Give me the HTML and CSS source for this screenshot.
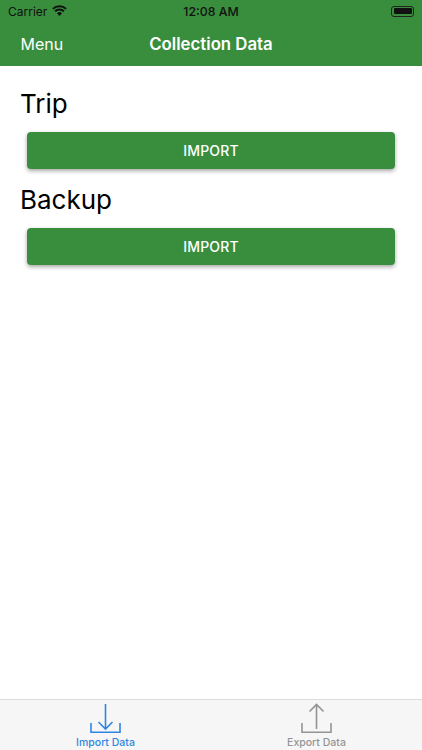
FILE: index.html
```html
<!DOCTYPE html>
<html lang="en">
<head>
  <meta charset="UTF-8">
  <meta name="viewport" content="width=device-width, initial-scale=1.0">
  <title>Collection Data</title>
  <link rel="stylesheet" href="styles.css">
</head>
<body>
  <div class="app">
    <header class="top">
      <div class="status-bar">
        <div class="status-left">
          <span class="carrier">Carrier</span>
          <svg class="wifi" width="15" height="11" viewBox="0 0 15 11">
            <path d="M7.500 11 5 8.300a3.600 3.600 0 0 1 5 0z" fill="#111"/>
            <path d="M.9 3.900a9.500 9.500 0 0 1 13.200 0M3.100 6.200a6.300 6.300 0 0 1 8.800 0" fill="none" stroke="#111" stroke-width="2"/>
          </svg>
        </div>
        <span class="clock">12:08 AM</span>
        <div class="battery"><span class="battery-fill"></span></div>
      </div>
      <div class="nav-bar">
        <span class="nav-menu">Menu</span>
        <span class="nav-title">Collection Data</span>
      </div>
    </header>

    <main class="content">
      <section class="group">
        <h2>Trip</h2>
        <button class="import-btn">IMPORT</button>
      </section>
      <section class="group">
        <h2>Backup</h2>
        <button class="import-btn">IMPORT</button>
      </section>
    </main>

    <nav class="tab-bar">
      <div class="tab-item active">
        <svg width="32" height="32" viewBox="0 0 32 32">
          <path d="M15.500 1v25M8.500 19l7 7 7-7M1 20v9.300h29V20" fill="none" stroke="currentColor" stroke-width="1.600"/>
        </svg>
        <span>Import Data</span>
      </div>
      <div class="tab-item">
        <svg width="32" height="32" viewBox="0 0 32 32">
          <path d="M15.500 26V1.500M8.500 8.500l7-7 7 7M1 20v9.300h29V20" fill="none" stroke="currentColor" stroke-width="1.600"/>
        </svg>
        <span>Export Data</span>
      </div>
    </nav>
  </div>
</body>
</html>
```

FILE: styles.css
```css
*{
  box-sizing: border-box;
}

html, body{
  margin: 0;
  height: 100%;
}

body{
  font-family: "Inter", "Liberation Sans", sans-serif;
  background: #fff;
}

.app{
  display: flex;
  flex-direction: column;
  height: 750px;
}

.top{
  background: #388e3c;
  height: 66px;
  flex-shrink: 0;
}

.status-bar{
  display: grid;
  grid-template-columns: 1fr auto 1fr;
  align-items: center;
  height: 22px;
  padding: 0 8px;
  color: #111;
  font-size: 12px;
}

.status-left{
  display: flex;
  align-items: center;
  gap: 5px;
}

.wifi{
  margin-top: -1px;
}

.clock{
  font-size: 12.300px;
  font-weight: 500;
}

.battery{
  justify-self: end;
  width: 23px;
  height: 11px;
  padding: 1.500px;
  border: 1px solid #222;
  border-radius: 3px;
}

.battery-fill{
  display: block;
  height: 100%;
  background: #111;
  border-radius: 1px;
}

.nav-bar{
  position: relative;
  display: flex;
  justify-content: center;
  align-items: center;
  height: 44px;
  color: #fff;
}

.nav-menu{
  position: absolute;
  left: 20.500px;
  font-size: 16px;
}

.nav-title{
  font-size: 16.800px;
  font-weight: 600;
}

.content{
  flex: 1;
  padding: 20px 27px 0 20px;
}

.group{
  margin-bottom: 13px;
}

.group h2{
  margin: 0;
  font-size: 26px;
  line-height: 36px;
  font-weight: 400;
  color: #000;
}

.import-btn{
  display: block;
  width: 368.500px;
  height: 37px;
  margin: 10px 0 0 6.800px;
  border: 0;
  border-radius: 4px;
  background: #388e3c;
  color: #fff;
  font-family: inherit;
  font-size: 14px;
  font-weight: 500;
  letter-spacing: 0.2px;
  box-shadow: 0 2px 4px rgba(0, 0, 0, 0.35);
}

.tab-bar{
  display: flex;
  height: 51px;
  flex-shrink: 0;
  background: #f7f6f7;
  border-top: 1px solid #dcdcdc;
}

.tab-item{
  flex: 1;
  display: flex;
  flex-direction: column;
  align-items: center;
  color: #949494;
  font-size: 10.500px;
  font-weight: 500;
  padding-top: 3px;
}

.tab-item.active{
  color: #2f86e0;
}

.tab-item svg{
  display: block;
}

.tab-item span{
  line-height: 13px;
  margin-top: 1px;
}
```
